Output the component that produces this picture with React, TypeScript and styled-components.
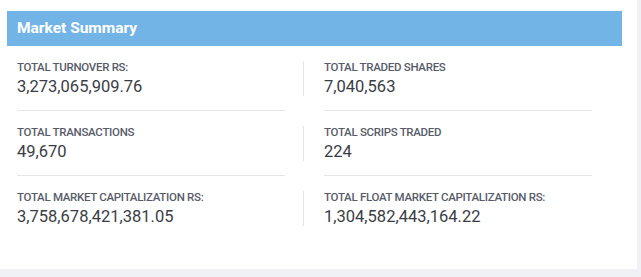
import React from "react";
import styled, { createGlobalStyle } from "styled-components";

const GlobalStyle = createGlobalStyle`
  body {
    margin: 0;
    background: #f0f1f5;
    font-family: Roboto, "Liberation Sans", sans-serif;
  }
`;

type Stat = { label: string; value: string };

const rows: Stat[][] = [
  [
    { label: "TOTAL TURNOVER RS:", value: "3,273,065,909.76" },
    { label: "TOTAL TRADED SHARES", value: "7,040,563" },
  ],
  [
    { label: "TOTAL TRANSACTIONS", value: "49,670" },
    { label: "TOTAL SCRIPS TRADED", value: "224" },
  ],
  [
    { label: "TOTAL MARKET CAPITALIZATION RS:", value: "3,758,678,421,381.05" },
    { label: "TOTAL FLOAT MARKET CAPITALIZATION RS:", value: "1,304,582,443,164.22" },
  ],
];

export default function App() {
  return (
    <>
      <GlobalStyle />
      <Panel>
        <Card>
          <Header>Market Summary</Header>
          <Body>
            {rows.map((row, i) => (
              <Row key={i}>
                {row.map((s, j) => (
                  <Cell key={j}>
                    <StatBox $right={j === 1}>
                      <Label>{s.label}</Label>
                      <Value>{s.value}</Value>
                    </StatBox>
                    {i < rows.length - 1 && <Separator $right={j === 1} />}
                  </Cell>
                ))}
              </Row>
            ))}
          </Body>
        </Card>
      </Panel>
    </>
  );
}

const Panel = styled.div`
  width: 637px;
  height: 269px;
  background: #fff;
  padding-top: 11px;
  box-sizing: border-box;
`;

const Card = styled.div`
  margin-left: 7px;
  width: 615px;
`;

const Header = styled.div`
  height: 35px;
  background: #72b4e6;
  color: #fff;
  font-weight: 700;
  font-size: 15.5px;
  line-height: 35px;
  padding-left: 10px;
`;

const Body = styled.div`
  padding: 15px 10px 0;
`;

const Row = styled.div`
  display: grid;
  grid-template-columns: 286px 1fr;
`;

const Cell = styled.div`
  display: flex;
  flex-direction: column;
`;

const StatBox = styled.div<{ $right?: boolean }>`
  height: 35px;
  border-left: ${(p) => (p.$right ? "1px solid #e6e6e6" : "none")};
  padding-left: ${(p) => (p.$right ? "20px" : "0")};
`;

const Label = styled.div`
  font-size: 11.5px;
  font-weight: 500;
  letter-spacing: -0.3px;
  color: #585c6a;
  line-height: 12px;
  margin-bottom: 4px;
`;

const Value = styled.div`
  font-size: 16.5px;
  color: #3a3d45;
  line-height: 20px;
`;

const Separator = styled.div<{ $right?: boolean }>`
  width: 268px;
  height: 1px;
  background: #e6e6e6;
  margin: 14px 0 15px ${(p) => (p.$right ? "21px" : "0")};
`;
